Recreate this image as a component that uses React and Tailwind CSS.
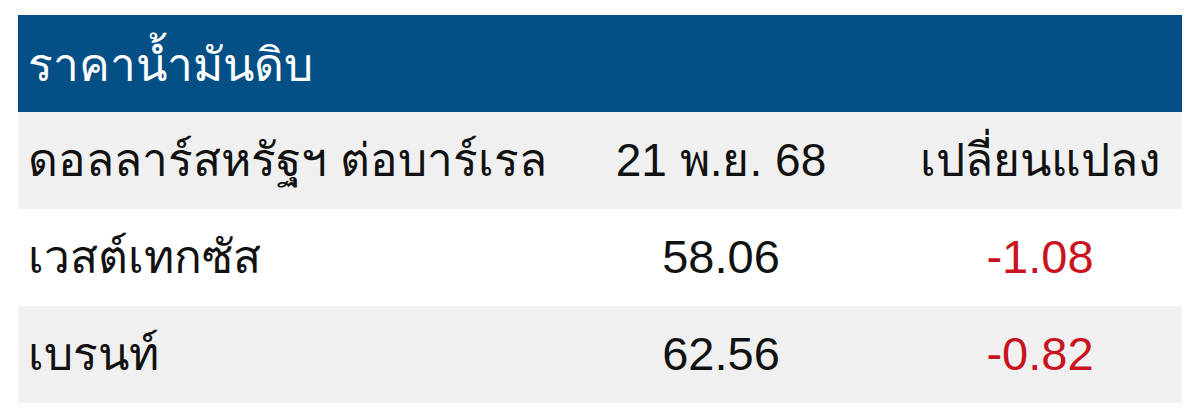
const rows = [
  { name: "เวสต์เทกซัส", price: "58.06", change: "-1.08", bg: "bg-white" },
  { name: "เบรนท์", price: "62.56", change: "-0.82", bg: "bg-[#f0f0f0]" },
];

export default function App() {
  return (
    <div className="h-[414px] w-[1200px] bg-white pt-[15px] pl-[18px] font-['Liberation_Sans',Arial,sans-serif] text-[#111]">
      <div className="w-[1164px]">
        <div className="flex h-[97px] items-center bg-[#034f86] pl-[10px] pt-[4px] text-[46px] text-white">
          ราคาน้ำมันดิบ
        </div>
        <div className="grid h-[97px] grid-cols-[526px_354px_284px] items-center bg-[#f0f0f0] text-[46px]">
          <div className="pl-[10px] whitespace-nowrap">ดอลลาร์สหรัฐฯ ต่อบาร์เรล</div>
          <div className="text-center">21 พ.ย. 68</div>
          <div className="text-center whitespace-nowrap">เปลี่ยนแปลง</div>
        </div>
        {rows.map((row) => (
          <div
            key={row.name}
            className={`grid h-[97px] grid-cols-[526px_354px_284px] items-center text-[47px] ${row.bg}`}
          >
            <div className="pl-[10px] text-[46px]">{row.name}</div>
            <div className="text-center">{row.price}</div>
            <div className="text-center text-[#c8141e]">{row.change}</div>
          </div>
        ))}
      </div>
    </div>
  );
}
